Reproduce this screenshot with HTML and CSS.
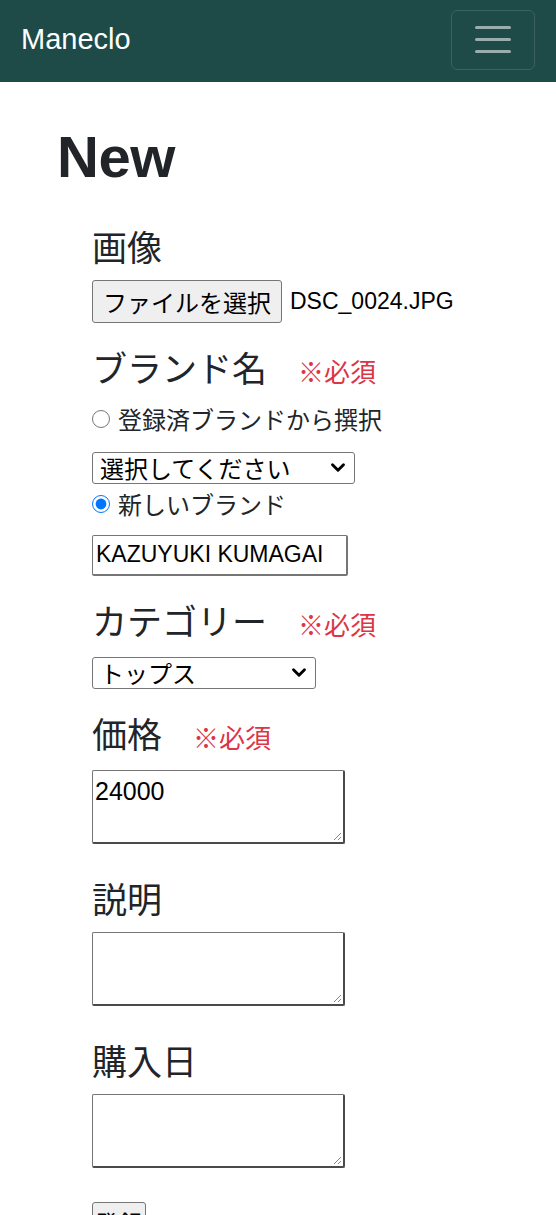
FILE: index.html
```html
<!DOCTYPE html>
<html lang="ja">
<head>
<meta charset="utf-8">
<title>Maneclo</title>
<link rel="stylesheet" href="styles.css">
</head>
<body>
<nav class="navbar">
  <a class="brand" href="#">Maneclo</a>
  <button class="toggler" type="button" aria-label="menu">
    <span class="bar"></span><span class="bar"></span><span class="bar"></span>
  </button>
</nav>
<main class="container">
  <h1 class="title">New</h1>
  <form class="form">
    <div class="group">
      <div class="label">画像</div>
      <div class="file-row">
        <span class="file-btn">ファイルを選択</span>
        <span class="file-name">DSC_0024.JPG</span>
      </div>
    </div>
    <div class="group">
      <div class="label">ブランド名<span class="req">※必須</span></div>
      <label class="radio-row"><input type="radio" name="b" class="radio"><span>登録済ブランドから撰択</span></label>
      <div class="select sel-brand"><span>選択してください</span><svg class="chev" viewBox="0 0 14 10"><path d="M2 2.5 L7 7.5 L12 2.5" fill="none" stroke="#000" stroke-width="2.6" stroke-linecap="round" stroke-linejoin="round"/></svg></div>
      <label class="radio-row radio-row2"><input type="radio" name="b" class="radio" checked><span>新しいブランド</span></label>
      <div class="text-input">KAZUYUKI KUMAGAI</div>
    </div>
    <div class="group">
      <div class="label">カテゴリー<span class="req">※必須</span></div>
      <div class="select sel-cat"><span>トップス</span><svg class="chev" viewBox="0 0 14 10"><path d="M2 2.5 L7 7.5 L12 2.5" fill="none" stroke="#000" stroke-width="2.6" stroke-linecap="round" stroke-linejoin="round"/></svg></div>
    </div>
    <div class="group group-ta">
      <div class="label">価格<span class="req">※必須</span></div>
      <div class="textarea">24000<span class="grip"></span></div>
    </div>
    <div class="group group-ta">
      <div class="label">説明</div>
      <div class="textarea"><span class="grip"></span></div>
    </div>
    <div class="group group-ta">
      <div class="label">購入日</div>
      <div class="textarea"><span class="grip"></span></div>
    </div>
    <div class="submit-row"><span class="submit">登録</span></div>
  </form>
</main>
</body>
</html>
```
FILE: styles.css
```css
* { box-sizing: border-box; }
html, body { margin: 0; padding: 0; }
body {
  font-family: "Liberation Sans", "Noto Sans CJK JP", sans-serif;
  color: #212529;
  background: #fff;
  overflow: hidden;
  height: 1215px;
}
.navbar {
  height: 82px;
  background: #1e4a47;
  display: flex;
  align-items: center;
  justify-content: space-between;
  padding: 0 21px 0 21px;
}
.brand {
  color: #fff;
  text-decoration: none;
  font-size: 29px;
  margin-top: -4px;
}
.toggler {
  width: 84px;
  height: 60px;
  margin-top: -3px;
  background: transparent;
  border: 1.5px solid rgba(255,255,255,0.13);
  border-radius: 6px;
  display: flex;
  flex-direction: column;
  align-items: center;
  justify-content: center;
  gap: 9px;
  padding: 0;
}
.bar {
  display: block;
  width: 36px;
  height: 3px;
  border-radius: 2px;
  background: rgba(255,255,255,0.55);
}
.container {
  padding: 0 0 0 57px;
}
.title {
  font-size: 58px;
  font-weight: 700;
  line-height: 1.2;
  margin: 40px 0 0 0;
  letter-spacing: -0.5px;
}
.form {
  padding-left: 35px;
  margin-top: 36px;
}
.group { margin-bottom: 26px; }
.group-ta { margin-bottom: 36px; }
.label {
  font-size: 35px;
  line-height: 42px;
  font-weight: 400;
  margin-bottom: 10px;
  display: flex;
  align-items: baseline;
}
.req {
  color: #dc3545;
  font-size: 26px;
  margin-left: 31px;
}
.file-row {
  display: flex;
  align-items: center;
  font-size: 23px;
}
.file-btn {
  display: inline-flex;
  align-items: center;
  height: 43px;
  padding: 0 10px;
  background: #efefef;
  border: 1px solid #767676;
  border-radius: 3px;
  color: #000;
  font-size: 24px;
}
.file-name { margin-left: 8px; color: #000; }
.radio-row {
  display: flex;
  align-items: center;
  font-size: 24px;
  height: 30px;
  margin-bottom: 18px;
}
.radio {
  width: 18px;
  height: 18px;
  margin: 0 8px 0 0;
}
.radio-row2 { margin-bottom: 16px; margin-top: 5px; }
.select {
  display: flex;
  align-items: center;
  justify-content: space-between;
  height: 32px;
  border: 1px solid #767676;
  border-radius: 3px;
  font-size: 24px;
  color: #000;
  padding: 0 8px 0 7px;
}
.sel-brand { width: 263px; }
.sel-cat { width: 224px; }
.chev { width: 16px; height: 11px; }
.text-input {
  width: 256px;
  height: 41px;
  border: 1.5px solid #767676;
  border-right-width: 2px;
  border-bottom-width: 2px;
  border-radius: 2px;
  font-size: 23px;
  color: #000;
  display: flex;
  align-items: center;
  padding: 0 3px;
}
.textarea {
  position: relative;
  width: 253px;
  height: 74px;
  border: 1px solid #767676;
  border-right: 2px solid #4a4a4a;
  border-bottom: 2px solid #4a4a4a;
  border-radius: 2px;
  font-size: 25px;
  color: #000;
  padding: 5px 2px;
  line-height: 30px;
}
.grip {
  position: absolute;
  right: 2px;
  bottom: 2px;
  width: 7px;
  height: 7px;
  background: linear-gradient(135deg, transparent 45%, #888 45%, #888 55%, transparent 55%, transparent 75%, #888 75%, #888 85%, transparent 85%);
}
.submit-row { margin-top: -2px; }
.submit {
  display: inline-block;
  font-size: 24px;
  padding: 2px 2px;
  background: #efefef;
  border: 1px solid #767676;
  border-radius: 3px;
  color: #000;
}
```
